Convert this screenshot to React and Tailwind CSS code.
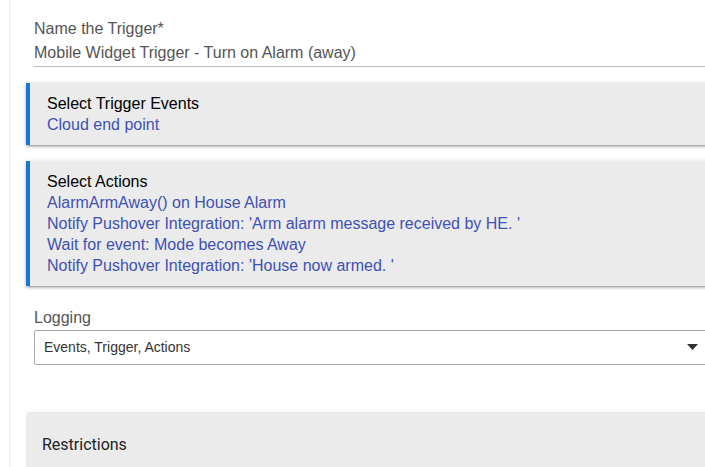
import React from "react";

const arial = { fontFamily: '"Liberation Sans", Arial, sans-serif' };

function Card({ title, lines }) {
  return (
    <div className="bg-[#ebebeb] border-l-4 border-[#1976d2] pl-[17px] py-[10px] leading-[21px] text-[16px] shadow-[0_2px_2px_0_rgba(0,0,0,0.14),0_3px_1px_-2px_rgba(0,0,0,0.12),0_1px_5px_0_rgba(0,0,0,0.2)]">
      <div className="text-black">{title}</div>
      {lines.map((l) => (
        <div key={l} className="text-[#3f51b5]">{l}</div>
      ))}
    </div>
  );
}

export default function App() {
  return (
    <div className="relative w-[705px] h-[467px] overflow-hidden bg-white" style={arial}>
      <div className="ml-[9px] w-[760px] h-full border-l border-[#eeeeee] pl-[16px] pt-[17px]">
        <div className="pl-[8px]">
          <div className="text-[16px] leading-[24px] text-[#555]">Name the Trigger*</div>
          <div className="text-[16px] leading-[24px] text-[#555] border-b border-[#bdbdbd] pb-[1px]">
            Mobile Widget Trigger - Turn on Alarm (away)
          </div>
        </div>
        <div className="mt-[16px]">
          <Card title="Select Trigger Events" lines={["Cloud end point"]} />
        </div>
        <div className="mt-[16px]">
          <Card
            title="Select Actions"
            lines={[
              "AlarmArmAway() on House Alarm",
              "Notify Pushover Integration: 'Arm alarm message received by HE. '",
              "Wait for event: Mode becomes Away",
              "Notify Pushover Integration: 'House now armed. '",
            ]}
          />
        </div>
        <div className="pl-[8px] mt-[22px]">
          <div className="text-[16px] leading-[20px] text-[#555]">Logging</div>
          <div className="mt-[2px] w-[700px] h-[35px] border border-[#a9a9a9] rounded-[2px] flex items-center pl-[9px] text-[14px] text-[#333]">
            <span className="flex-1">Events, Trigger, Actions</span>
          </div>
        </div>
        <div className="mt-[47px] bg-[#ebebeb] rounded-tl-[4px] h-[60px] pl-[16px] pt-[23px] shadow-[0_-1px_4px_0_rgba(0,0,0,0.04)]">
          <div className="text-[16px] leading-[20px] text-[#222]" style={{ fontFamily: "Roboto, sans-serif" }}>
            Restrictions
          </div>
        </div>
      </div>
      <svg className="absolute left-[687px] top-[344px]" width="11" height="6" viewBox="0 0 11 6">
        <path d="M0 0 H11 L5.5 6 Z" fill="#333" />
      </svg>
    </div>
  );
}
